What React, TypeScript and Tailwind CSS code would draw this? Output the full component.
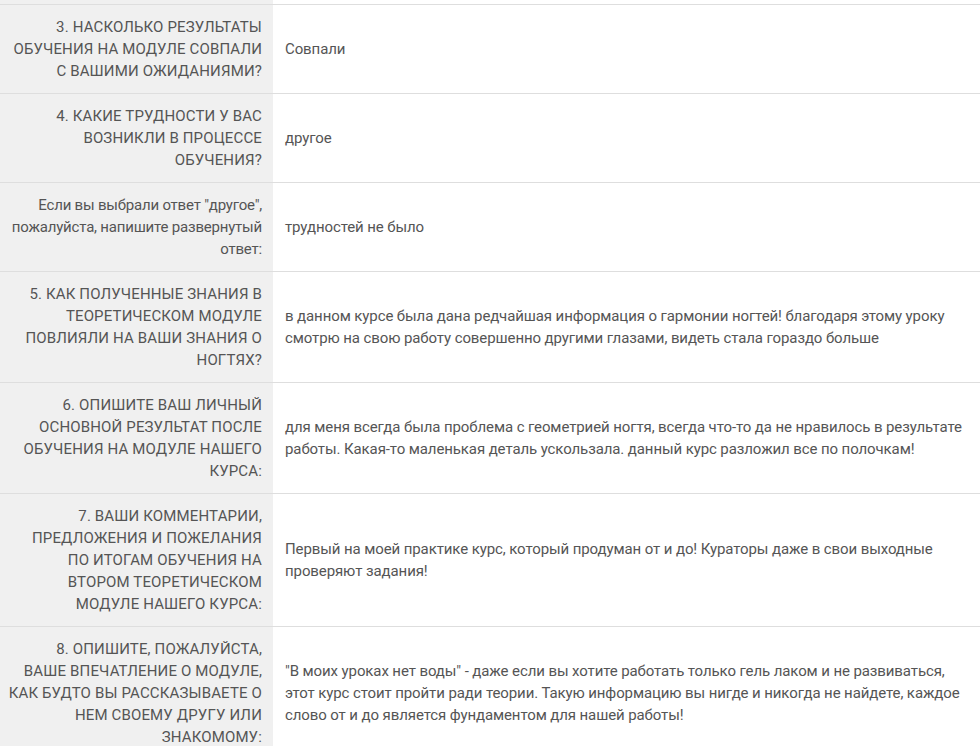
const rows = [
  {
    q: ["3. НАСКОЛЬКО РЕЗУЛЬТАТЫ", "ОБУЧЕНИЯ НА МОДУЛЕ СОВПАЛИ", "С ВАШИМИ ОЖИДАНИЯМИ?"],
    a: "Совпали",
    caps: true,
  },
  {
    q: ["4. КАКИЕ ТРУДНОСТИ У ВАС", "ВОЗНИКЛИ В ПРОЦЕССЕ", "ОБУЧЕНИЯ?"],
    a: "другое",
    caps: true,
  },
  {
    q: ['Если вы выбрали ответ "другое",', "пожалуйста, напишите развернутый", "ответ:"],
    a: "трудностей не было",
    caps: false,
  },
  {
    q: ["5. КАК ПОЛУЧЕННЫЕ ЗНАНИЯ В", "ТЕОРЕТИЧЕСКОМ МОДУЛЕ", "ПОВЛИЯЛИ НА ВАШИ ЗНАНИЯ О", "НОГТЯХ?"],
    a: "в данном курсе была дана редчайшая информация о гармонии ногтей! благодаря этому уроку смотрю на свою работу совершенно другими глазами, видеть стала гораздо больше",
    caps: true,
  },
  {
    q: ["6. ОПИШИТЕ ВАШ ЛИЧНЫЙ", "ОСНОВНОЙ РЕЗУЛЬТАТ ПОСЛЕ", "ОБУЧЕНИЯ НА МОДУЛЕ НАШЕГО", "КУРСА:"],
    a: "для меня всегда была проблема с геометрией ногтя, всегда что-то да не нравилось в результате работы. Какая-то маленькая деталь ускользала. данный курс разложил все по полочкам!",
    caps: true,
  },
  {
    q: [
      "7. ВАШИ КОММЕНТАРИИ,",
      "ПРЕДЛОЖЕНИЯ И ПОЖЕЛАНИЯ",
      "ПО ИТОГАМ ОБУЧЕНИЯ НА",
      "ВТОРОМ ТЕОРЕТИЧЕСКОМ",
      "МОДУЛЕ НАШЕГО КУРСА:",
    ],
    a: "Первый на моей практике курс, который продуман от и до! Кураторы даже в свои выходные проверяют задания!",
    caps: true,
  },
  {
    q: [
      "8. ОПИШИТЕ, ПОЖАЛУЙСТА,",
      "ВАШЕ ВПЕЧАТЛЕНИЕ О МОДУЛЕ,",
      "КАК БУДТО ВЫ РАССКАЗЫВАЕТЕ О",
      "НЕМ СВОЕМУ ДРУГУ ИЛИ",
      "ЗНАКОМОМУ:",
    ],
    a: '"В моих уроках нет воды" - даже если вы хотите работать только гель лаком и не развиваться, этот курс стоит пройти ради теории. Такую информацию вы нигде и никогда не найдете, каждое слово от и до является фундаментом для нашей работы!',
    caps: true,
  },
];

export default function App() {
  return (
    <div className="w-[980px] h-[746px] overflow-hidden bg-white text-[15px] leading-[22px] text-[#555] font-['Roboto','Noto_Sans',sans-serif]">
      <div className="flex h-[4px]">
        <div className="w-[273px] shrink-0 bg-[#f0f0f0]" />
        <div className="flex-1" />
      </div>
      {rows.map((r, i) => (
        <div key={i} className="flex border-t border-[#dedede]">
          <div className="w-[273px] shrink-0 bg-[#f0f0f0] py-[11px] pl-[8px] pr-[11px] flex flex-col justify-center items-end text-right">
            {r.q.map((line, j) => (
              <span key={j} className={"whitespace-nowrap " + (r.caps ? "tracking-[0.15px]" : "tracking-[-0.2px]")}>
                {line}
              </span>
            ))}
          </div>
          <div className="flex-1 py-[11px] pl-[12px] pr-[8px] flex items-center">
            <span className="tracking-[-0.1px]">{r.a}</span>
          </div>
        </div>
      ))}
    </div>
  );
}
